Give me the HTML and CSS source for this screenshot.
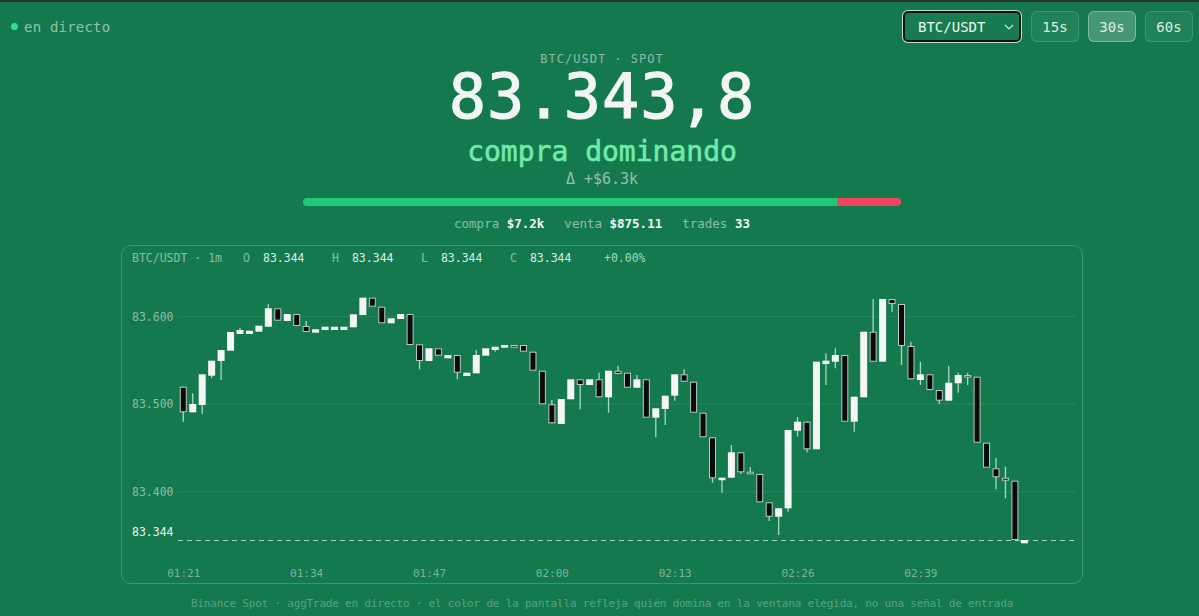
FILE: index.html
```html
<!DOCTYPE html>
<html lang="es">
<head>
<meta charset="utf-8">
<title>BTC/USDT · en directo</title>
<link rel="stylesheet" href="styles.css">
</head>
<body>
<header class="topbar">
  <div class="live"><span class="dot"></span>en directo</div>
  <div class="controls">
    <div class="select">BTC/USDT<svg class="chev" viewBox="0 0 10 6" width="10" height="6"><path d="M1 1l4 4 4-4" fill="none" stroke="currentColor" stroke-width="1.2"/></svg></div>
    <button class="tf">15s</button>
    <button class="tf active">30s</button>
    <button class="tf">60s</button>
  </div>
</header>
<main class="main">
  <div class="sub">BTC/USDT · SPOT</div>
  <div class="price">83.343,8</div>
  <div class="state">compra dominando</div>
  <div class="delta">Δ +$6.3k</div>
  <div class="bar"><div class="buy" style="width:89.3%"></div><div class="sell"></div></div>
  <div class="stats">
    <span>compra <b>$7.2k</b></span>
    <span>venta <b>$875.11</b></span>
    <span>trades <b>33</b></span>
  </div>
  <section class="chart">
    <div class="chart-head">
      <span class="sym">BTC/USDT · 1m</span>
      <span class="g"><span class="k">O</span><span class="v">83.344</span></span>
      <span class="g"><span class="k">H</span><span class="v">83.344</span></span>
      <span class="g"><span class="k">L</span><span class="v">83.344</span></span>
      <span class="g"><span class="k">C</span><span class="v">83.344</span></span>
      <span class="pct">+0.00%</span>
    </div>
    <svg id="chart" class="plot" width="960" height="317" viewBox="122 266 960 317"></svg>
  </section>
  <footer class="foot">Binance Spot · aggTrade en directo · el color de la pantalla refleja quién domina en la ventana elegida, no una señal de entrada</footer>
</main>
<script src="script.js"></script>
</body>
</html>
```

FILE: styles.css
```css
* { box-sizing: border-box; }
html, body { margin: 0; }
body {
  background: #147a4e;
  color: #eef6f1;
  font-family: "DejaVu Sans Mono", monospace;
  border-top: 2px solid #2b332f;
  padding-left: 5px;
  height: 616px;
  overflow: hidden;
}
.topbar {
  display: flex;
  justify-content: space-between;
  align-items: center;
  padding: 9px 6px 9px 6px;
}
.live {
  display: flex;
  align-items: center;
  gap: 6px;
  font-size: 14px;
  letter-spacing: 0.2px;
  color: rgba(255,255,255,0.55);
}
.dot {
  width: 7px;
  height: 7px;
  border-radius: 50%;
  background: #2fe08c;
}
.controls {
  display: flex;
  align-items: center;
  gap: 9px;
}
.select {
  width: 118px;
  height: 31px;
  margin-right: 1px;
  border: 2px solid #0f1512;
  border-radius: 5px;
  box-shadow: 0 0 0 1px rgba(255,255,255,0.75);
  background: #177c50;
  display: flex;
  align-items: center;
  justify-content: space-between;
  padding: 0 5px 0 13px;
  font-size: 14px;
  color: #eef6f1;
}
.chev { color: #cfe6d9; }
.tf {
  width: 48px;
  height: 31px;
  padding: 0;
  border: 1px solid rgba(255,255,255,0.14);
  border-radius: 6px;
  background: rgba(255,255,255,0.06);
  color: #dcefe4;
  font-family: "DejaVu Sans Mono", monospace;
  font-size: 14px;
}
.tf.active {
  background: rgba(255,255,255,0.22);
  border-color: rgba(255,255,255,0.3);
}
.main {
  width: 962px;
  margin: 0 auto;
  text-align: center;
}
.sub {
  font-size: 12px;
  line-height: 16px;
  letter-spacing: 1px;
  color: rgba(255,255,255,0.5);
}
.price {
  font-size: 62px;
  line-height: 60px;
  letter-spacing: 1px;
  color: #f2f5f3;
  -webkit-text-stroke: 1.1px #f2f5f3;
}
.state {
  margin-top: 8px;
  font-size: 28px;
  line-height: 34px;
  color: #72eaa9;
  -webkit-text-stroke: 0.6px #72eaa9;
}
.delta {
  font-size: 15px;
  line-height: 20px;
  color: rgba(255,255,255,0.55);
}
.bar {
  margin: 9px auto 0;
  width: 598px;
  height: 8px;
  border-radius: 4px;
  overflow: hidden;
  display: flex;
}
.buy { background: #1ec97a; }
.sell { flex: 1; background: #f34560; }
.stats {
  margin-top: 9px;
  display: flex;
  justify-content: center;
  gap: 20px;
  font-size: 12.5px;
  line-height: 18px;
  color: rgba(255,255,255,0.5);
}
.stats b { color: #f2f5f3; }
.chart {
  margin-top: 12px;
  height: 339px;
  border: 1px solid rgba(255,255,255,0.18);
  border-radius: 10px;
  text-align: left;
}
.chart-head {
  display: flex;
  height: 20px;
  padding: 4px 10px 0;
  font-size: 11.5px;
  line-height: 16px;
  color: rgba(255,255,255,0.5);
  white-space: nowrap;
}
.sym { margin-right: 21px; }
.g { margin-right: 27.5px; }
.k { margin-right: 13px; }
.v { color: #dbeee3; }
.pct { margin-left: 5px; color: rgba(200,255,225,0.75); }
.plot { display: block; }
.plot .grid { stroke: rgba(255,255,255,0.08); stroke-width: 1; }
.plot .cur-line { stroke: rgba(255,255,255,0.65); stroke-width: 1; stroke-dasharray: 5 4; }
.plot .ylab { fill: rgba(255,255,255,0.5); font-size: 11.5px; font-family: "DejaVu Sans Mono", monospace; }
.plot .ylab.cur { fill: #e8f4ec; }
.plot .xlab { fill: rgba(255,255,255,0.45); font-size: 11px; font-family: "DejaVu Sans Mono", monospace; }
.plot .wick { stroke: #a3dbbf; stroke-width: 1.3; }
.plot .up { fill: #f5f5f5; }
.plot .down { fill: #0b0b0b; stroke: #bcc7c1; stroke-width: 1; }
.foot {
  margin-top: 13px;
  font-size: 11px;
  line-height: 14px;
  letter-spacing: -0.2px;
  color: rgba(255,255,255,0.3);
  white-space: nowrap;
}
```

FILE: script.js
```js
(function () {
  var NS = 'http://www.w3.org/2000/svg';
  var svg = document.getElementById('chart');
  function el(tag, attrs, text) {
    var e = document.createElementNS(NS, tag);
    for (var k in attrs) e.setAttribute(k, attrs[k]);
    if (text) e.textContent = text;
    svg.appendChild(e);
    return e;
  }
  var grid = [['83.600', 316.7], ['83.500', 404], ['83.400', 491.7]];
  grid.forEach(function (g) {
    el('line', { x1: 178, x2: 1076, y1: g[1], y2: g[1], 'class': 'grid' });
    el('text', { x: 132, y: g[1] + 4, 'class': 'ylab' }, g[0]);
  });
  el('line', { x1: 178, x2: 1076, y1: 540.5, y2: 540.5, 'class': 'cur-line' });
  el('text', { x: 132, y: 535.7, 'class': 'ylab cur' }, '83.344');

  var times = ['01:21', '01:34', '01:47', '02:00', '02:13', '02:26', '02:39'];
  times.forEach(function (t, i) {
    el('text', { x: 183.8 + i * 13 * 9.45, y: 577, 'class': 'xlab', 'text-anchor': 'middle' }, t);
  });

  // [type, bodyTop, bodyBottom, wickTop, wickBottom]
  var d = [
    ['b',386.7,412.3,386.7,421.7],['w',404,412.3,393.3,412.3],['w',374.3,405,374.3,414],
    ['w',360.7,375.7,360.7,378],['w',350,361,350,380],['w',332,350.7],['w',330,334,327.7,334],
    ['w',330.7,334],['w',325.7,331.7],['w',308.3,326.7,304.3,326.7],['b',308.3,320.7],
    ['w',314,321],['b',314,326],['b',326,332,321,332],['w',329.3,332.7],['w',326.7,330],
    ['w',326.7,330],['w',326.7,330],['w',314.3,327.3],['w',297.7,315],['b',297.7,306.7],
    ['b',306.7,323.3],['w',318.3,323.3],['w',314,319],['b',314,345],['b',344.3,361,344.3,369.3],
    ['w',348.3,361],['b',348.3,355.7],['w',355,358.3],['b',355,372.7,355,379.3],['w',372.7,376],
    ['w',355,373.3,350,373.3],['w',348.3,355.7],['w',346.7,350,346.7,351.7],['w',345,347.7],
    ['b',345,347.7],['b',345,351.7],['b',351.7,370.7],['b',370.7,404.3],['b',404.3,423.3,400,423.3],
    ['w',399,424],['w',379.3,399.3],['b',379.3,385,379.3,409.3],['w',379.3,385],
    ['b',379.3,397.3,372.7,397.3],['w',370.7,397.3,370.7,412.7],['b',370.7,374,366,374],
    ['b',372.7,387.7],['w',379.3,387.7,375,387.7],['b',379.3,417.7],['w',408.3,417.7,408.3,437.3],
    ['w',395.7,409,395.7,425],['w',374.3,395.7,374.3,400.7],['b',374.3,381.7,369.3,381.7],
    ['b',381.7,412.7],['b',412.7,437.3],['b',437.3,478.3,437.3,482.7],['w',477.7,480,477.7,492.7],
    ['w',452.3,477.7,445,477.7],['b',452.3,472.3,452.3,474],['b',471.7,474.3,467.3,474.3],
    ['b',474,502.3],['b',502.3,516.7,502.3,521],['w',508.3,516.7,508.3,535],['w',430,508.3,430,511.7],
    ['w',421.7,430.7,417,436.7],['b',421.7,449.3,421.7,452.3],['w',361.7,449.3],
    ['w',360.7,364,353.3,385],['w',355,361.7,348.3,368.3],['b',355,421.7],['w',396.7,421.7,396.7,431.7],
    ['w',331.7,397.3],['b',331.7,361.7,299,361.7],['w',299,361.7],['b',299,304,299,311.7],
    ['b',304,346,304,365],['b',346,379.3,341.7,379.3],['w',374.3,380,361.7,385],['b',374.3,390],
    ['b',390,400.7,390,404],['w',382.7,400.7,366,400.7],['w',375,383.3,372.7,392.7],
    ['b',375,377.3,372.7,385],['b',376.7,442.7],['b',442.7,467.7],['b',468.3,477.3,458,489.3],
    ['b',477.7,480.7,466.7,498.3],['b',480.7,540],['w',540,543.3]
  ];
  d.forEach(function (c, i) {
    var cx = 183.3 + i * 9.45;
    var top = c[1], bot = c[2];
    var wt = c[3] !== undefined ? c[3] : top;
    var wb = c[4] !== undefined ? c[4] : bot;
    if (wt < top || wb > bot) {
      el('line', { x1: cx, x2: cx, y1: wt, y2: wb, 'class': 'wick' });
    }
    if (c[0] === 'w') {
      el('rect', { x: cx - 3.5, y: top, width: 7, height: Math.max(bot - top, 2.5), 'class': 'up' });
    } else {
      el('rect', { x: cx - 3, y: top + 0.5, width: 6, height: Math.max(bot - top - 1, 1.5), 'class': 'down' });
    }
  });
})();
```
